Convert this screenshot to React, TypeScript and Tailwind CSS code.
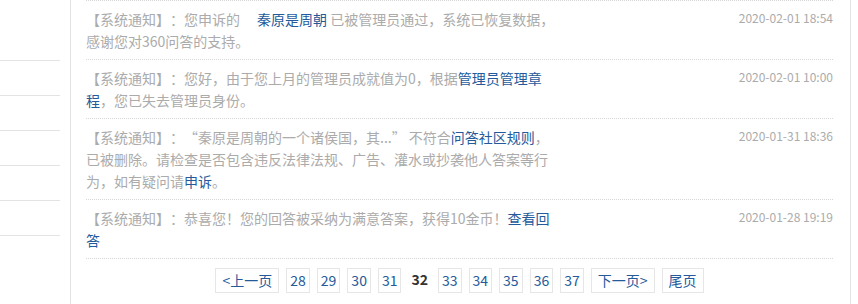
import React from "react";

type Notice = {
  date: string;
  body: React.ReactNode;
};

const link = "text-[#245a9a]";

const notices: Notice[] = [
  {
    date: "2020-02-01 18:54",
    body: (
      <>
        【系统通知】：您申诉的<span className={`ml-[17px] ${link}`}>秦原是周朝</span> 已被管理员通过，系统已恢复数据，
        <br />
        感谢您对360问答的支持。
      </>
    ),
  },
  {
    date: "2020-02-01 10:00",
    body: (
      <>
        【系统通知】：您好，由于您上月的管理员成就值为0，根据<span className={link}>管理员管理章</span>
        <br />
        <span className={link}>程</span>，您已失去管理员身份。
      </>
    ),
  },
  {
    date: "2020-01-31 18:36",
    body: (
      <>
        【系统通知】：“秦原是周朝的一个诸侯国，其...” 不符合<span className={link}>问答社区规则</span>，
        <br />
        已被删除。请检查是否包含违反法律法规、广告、灌水或抄袭他人答案等行
        <br />
        为，如有疑问请<span className={link}>申诉</span>。
      </>
    ),
  },
  {
    date: "2020-01-28 19:19",
    body: (
      <>
        【系统通知】：恭喜您！您的回答被采纳为满意答案，获得10金币！<span className={link}>查看回</span>
        <br />
        <span className={link}>答</span>
      </>
    ),
  },
];

const pages = ["28", "29", "30", "31", "32", "33", "34", "35", "36", "37"];

export default function App() {
  return (
    <div
      className="flex h-[304px] w-[858px] overflow-hidden bg-white [text-spacing-trim:space-all]"
      style={{ fontFamily: '"Noto Sans CJK SC", "Liberation Sans", sans-serif' }}
    >
      {/* sidebar */}
      <div className="w-[71px] shrink-0 border-r border-[#e3e3e3]">
        <div className="w-[60px]">
          <div className="h-[61px] border-b border-[#e3e3e3]" />
          <div className="h-[35px] border-b border-[#e3e3e3]" />
          <div className="h-[35px] border-b border-[#e3e3e3]" />
          <div className="h-[35px] border-b border-[#e3e3e3]" />
          <div className="h-[35px] border-b border-[#e3e3e3]" />
          <div className="h-[35px] border-b border-[#e3e3e3]" />
        </div>
      </div>

      {/* notices */}
      <div className="w-[780px] shrink-0 border-r border-[#e3e3e3] pl-[15px] pr-[17px]">
        <ul className="border-t border-dotted border-[#d6d6d6]">
          {notices.map((n) => (
            <li
              key={n.date}
              className="flex items-start justify-between border-b border-dotted border-[#d6d6d6] py-[7px]"
            >
              <p className="w-[500px] whitespace-nowrap text-[14px] leading-[22px] text-[#ababab]">
                {n.body}
              </p>
              <span className="text-[12px] leading-[20px] text-[#ababab]">{n.date}</span>
            </li>
          ))}
        </ul>

        <div className="mt-[9px] flex justify-center gap-[7px] text-[14px] leading-[23px]">
          <a className="border border-[#e6e6e6] px-[6px] text-[#245a9a]">&lt;上一页</a>
          {pages.map((p) =>
            p === "32" ? (
              <span key={p} className="px-[3px] font-bold text-[#333]">
                {p}
              </span>
            ) : (
              <a key={p} className="border border-[#e6e6e6] px-[3px] text-[#245a9a]">
                {p}
              </a>
            )
          )}
          <a className="border border-[#e6e6e6] px-[6px] text-[#245a9a]">下一页&gt;</a>
          <a className="border border-[#e6e6e6] px-[6px] text-[#245a9a]">尾页</a>
        </div>
      </div>
    </div>
  );
}
